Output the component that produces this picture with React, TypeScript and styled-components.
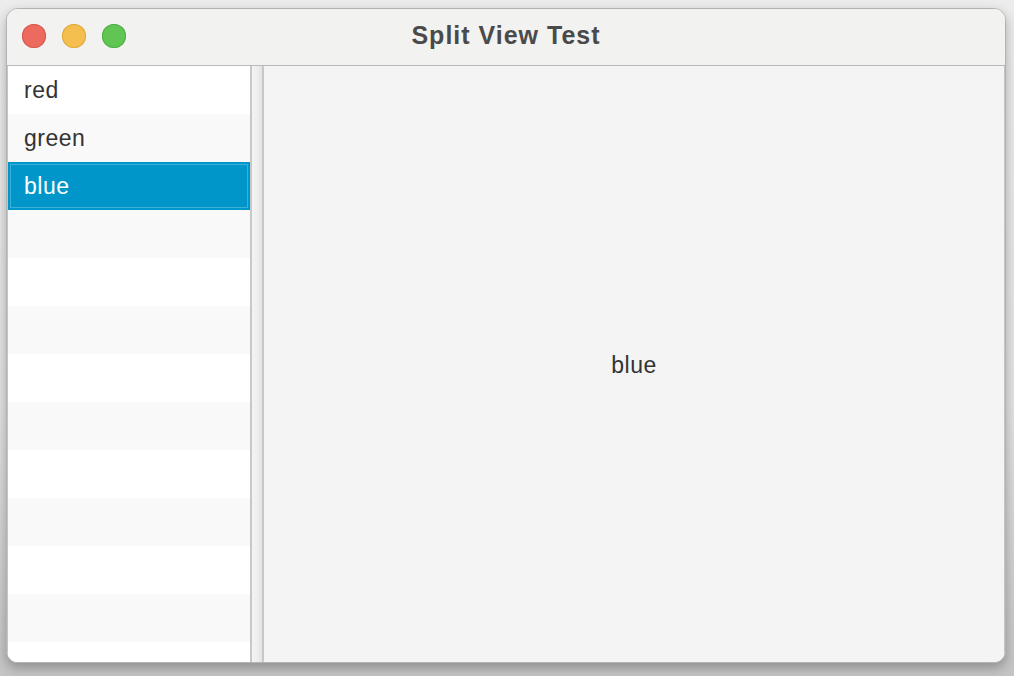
import React, { useState } from "react";
import styled, { createGlobalStyle } from "styled-components";

const Global = createGlobalStyle`
  html, body { margin: 0; padding: 0; }
  body {
    width: 1014px;
    height: 676px;
    overflow: hidden;
    background: linear-gradient(180deg, #ececec 0%, #e2e2e2 60%, #c4c4c4 100%);
    font-family: "Liberation Sans", Arial, sans-serif;
  }
`;

const Stage = styled.div`
  padding: 8px 8px 0 6px;
`;

const Window = styled.div`
  width: 1000px;
  height: 655px;
  box-sizing: border-box;
  border: 1px solid #b3b3b3;
  border-radius: 12px;
  overflow: hidden;
  display: flex;
  flex-direction: column;
  background: #f2f2f1;
  box-shadow: 0 5px 12px rgba(0, 0, 0, 0.28);
`;

const TitleBar = styled.div`
  position: relative;
  height: 56px;
  flex: none;
  display: flex;
  align-items: center;
  justify-content: center;
  background: #f2f2f1;
  border-bottom: 1px solid #b9b9b9;
`;

const Lights = styled.div`
  position: absolute;
  left: 15px;
  top: 15px;
  display: flex;
  gap: 16px;
`;

const Light = styled.span<{ $c: string; $b: string }>`
  width: 24px;
  height: 24px;
  border-radius: 50%;
  background: ${(p) => p.$c};
  box-shadow: inset 0 0 0 1px ${(p) => p.$b};
`;

const Title = styled.div`
  font-weight: bold;
  font-size: 25px;
  letter-spacing: 1px;
  color: #4a4a4a;
  margin-top: -4px;
`;

const Body = styled.div`
  flex: 1;
  display: flex;
  min-height: 0;
  border-left: 1px solid #c4c4c4;
  border-right: 1px solid #c4c4c4;
`;

const List = styled.div`
  width: 242px;
  flex: none;
  background: #ffffff;
  overflow: hidden;
`;

const Row = styled.div<{ $odd: boolean; $selected: boolean }>`
  height: 48px;
  box-sizing: border-box;
  display: flex;
  align-items: center;
  padding-left: 16px;
  padding-top: 1px;
  font-size: 23px;
  letter-spacing: 0.5px;
  color: ${(p) => (p.$selected ? "#ffffff" : "#333333")};
  background: ${(p) => (p.$selected ? "#0096c9" : p.$odd ? "#f9f9f9" : "#ffffff")};
  box-shadow: ${(p) =>
    p.$selected ? "inset 0 0 0 2px #0096c9, inset 0 0 0 3px #3db0da" : "none"};
  cursor: default;
`;

const Divider = styled.div`
  width: 10px;
  flex: none;
  border-left: 2px solid #c8c8c8;
  border-right: 2px solid #c8c8c8;
  background: linear-gradient(90deg, #f4f4f4 0%, #ededed 60%, #e2e2e2 100%);
`;

const Detail = styled.div`
  flex: 1;
  background: #f4f4f4;
  display: flex;
  align-items: center;
  justify-content: center;
  font-size: 23px;
  letter-spacing: 0.5px;
  color: #333333;
  padding-top: 2px;
`;

const items = ["red", "green", "blue"];

export default function App() {
  const [sel, setSel] = useState(2);
  const rows = Array.from({ length: 13 }, (_, i) => i);
  return (
    <Stage>
      <Global />
      <Window>
        <TitleBar>
          <Lights>
            <Light $c="#ec6a5e" $b="#d85a4f" />
            <Light $c="#f5bf4f" $b="#dea83e" />
            <Light $c="#61c554" $b="#50ad44" />
          </Lights>
          <Title>Split View Test</Title>
        </TitleBar>
        <Body>
          <List>
            {rows.map((i) => (
              <Row
                key={i}
                $odd={i % 2 === 1}
                $selected={i === sel}
                onClick={() => i < items.length && setSel(i)}
              >
                {items[i] ?? ""}
              </Row>
            ))}
          </List>
          <Divider />
          <Detail>{items[sel]}</Detail>
        </Body>
      </Window>
    </Stage>
  );
}
